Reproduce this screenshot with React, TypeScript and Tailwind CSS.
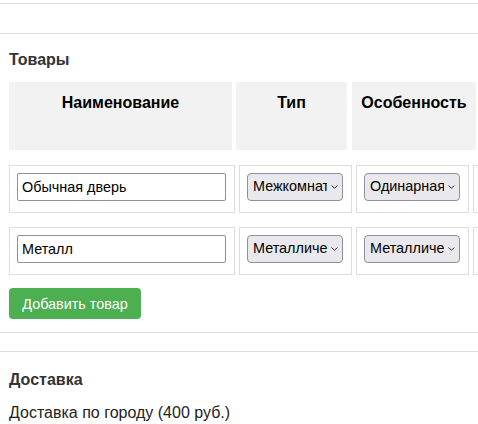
import { useState } from "react"

type Item = { name: string; type: string; feature: string }

const types = ["Межкомнатная", "Металлическая"]
const features = ["Одинарная", "Металлическая", "Двойная"]

function Chevron() {
  return (
    <svg
      className="pointer-events-none absolute right-[5px] top-1/2 -translate-y-1/2"
      width="7"
      height="4"
      viewBox="0 0 7 4"
      fill="none"
    >
      <path d="M0.8 0.8l2.7 2.5 2.7-2.5" stroke="#333" strokeWidth="1" strokeLinecap="round" strokeLinejoin="round" />
    </svg>
  )
}

function Select({ value, options, onChange }: { value: string; options: string[]; onChange: (v: string) => void }) {
  return (
    <div className="relative w-[96px] h-[28px]">
      <select
        value={value}
        onChange={(e) => onChange(e.target.value)}
        className="appearance-none w-full h-full bg-[#e9e9ed] border border-[#8f8f9d] rounded-[4px] pl-[5px] pr-[15px] text-[14.4px] text-black outline-none overflow-hidden"
      >
        {options.map((o) => (
          <option key={o}>{o}</option>
        ))}
      </select>
      <Chevron />
    </div>
  )
}

export default function App() {
  const [items, setItems] = useState<Item[]>([
    { name: "Обычная дверь", type: "Межкомнатная", feature: "Одинарная" },
    { name: "Металл", type: "Металлическая", feature: "Металлическая" },
  ])

  const update = (i: number, patch: Partial<Item>) =>
    setItems(items.map((it, idx) => (idx === i ? { ...it, ...patch } : it)))

  return (
    <div className="w-[478px] h-[424px] overflow-hidden bg-white text-black font-['Liberation_Sans',Arial,sans-serif]">
      <div className="h-[4px] border-b border-[#dddddd]" />

      <div className="mt-[29px] border-t border-[#dddddd] pb-[13px] border-b">
        <h3 className="pt-[17px] ml-[9px] text-[16px] leading-[18px] font-bold text-[#333]">Товары</h3>

        <div className="mt-[13px] ml-[9px] flex w-max">
          <div className="w-[223px] h-[68px] bg-[#f2f2f2] pt-[12px] text-center font-bold text-[16px] leading-[18px]">
            Наименование
          </div>
          <div className="ml-[4px] w-[111px] h-[68px] bg-[#f2f2f2] pt-[12px] text-center font-bold text-[16px] leading-[18px]">
            Тип
          </div>
          <div className="ml-[5px] w-[124px] h-[68px] bg-[#f2f2f2] pt-[12px] text-center font-bold text-[16px] leading-[18px]">
            Особенность
          </div>
          <div className="ml-[4px] w-[113px] h-[68px] bg-[#f2f2f2]" />
        </div>

        <div className="mt-[15px] ml-[9px] flex flex-col gap-[14px]">
          {items.map((it, i) => (
            <div key={i} className="flex gap-[4px] w-max">
              <div className="w-[226px] h-[48px] border border-[#dddddd] pt-[7px] pl-[7px]">
                <input
                  value={it.name}
                  onChange={(e) => update(i, { name: e.target.value })}
                  className="w-[209px] h-[28px] border border-[#8f8f9d] rounded-[2px] px-[4px] text-[14.4px] text-black outline-none"
                />
              </div>
              <div className="w-[113px] h-[48px] border border-[#dddddd] pt-[7px] pl-[7px]">
                <Select value={it.type} options={types} onChange={(v) => update(i, { type: v })} />
              </div>
              <div className="w-[113px] h-[48px] border border-[#dddddd] pt-[7px] pl-[7px]">
                <Select value={it.feature} options={features} onChange={(v) => update(i, { feature: v })} />
              </div>
              <div className="w-[113px] h-[48px] border border-[#dddddd]" />
            </div>
          ))}
        </div>

        <button
          onClick={() => setItems([...items, { name: "", type: types[0], feature: features[0] }])}
          className="mt-[13px] ml-[9px] w-[132px] h-[31px] bg-[#4caf50] rounded-[4px] text-white text-[14.4px] leading-[18px]"
        >
          Добавить товар
        </button>
      </div>

      <div className="mt-[18px] border-t border-[#dddddd]">
        <h3 className="pt-[19px] ml-[9px] text-[16px] leading-[18px] font-bold text-[#333]">Доставка</h3>
        <p className="mt-[15px] ml-[9px] text-[16px] leading-[18px] text-[#222]">Доставка по городу (400 руб.)</p>
      </div>
    </div>
  )
}
